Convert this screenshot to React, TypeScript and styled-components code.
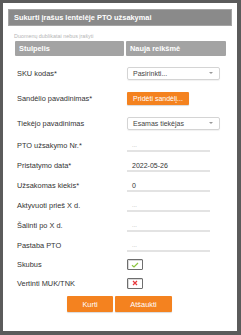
import styled, { createGlobalStyle } from 'styled-components';

const GlobalStyle = createGlobalStyle`
  html, body {
    margin: 0;
    padding: 0;
    background: #5b5b5b;
  }
  body {
    font-family: 'Liberation Sans', Arial, sans-serif;
    color: #333;
  }
`;

const Page = styled.div`
  width: 241px;
  height: 335px;
  padding: 3px 4px 4px 3px;
  box-sizing: border-box;
  background: #5b5b5b;
`;

const Dialog = styled.div`
  width: 234px;
  height: 328px;
  background: #fff;
  padding: 6px 5px 0 5px;
  box-sizing: border-box;
  display: flex;
  flex-direction: column;
`;

const TitleBar = styled.div`
  height: 17px;
  background: #8a8a8a;
  border: 1px solid #a5a5a5;
  box-sizing: border-box;
  display: flex;
  align-items: center;
  padding-left: 5px;
  color: #fff;
  font-weight: bold;
  font-size: 7.4px;
`;

const Hint = styled.div`
  margin: 5px 0 0 6px;
  font-size: 5.4px;
  color: #b5b5b5;
  height: 10px;
  line-height: 10px;
`;

const Body = styled.div`
  padding: 0 6px 0 7px;
  margin-top: 0;
`;

const HeadRow = styled.div`
  display: grid;
  grid-template-columns: 109px 100px;
  column-gap: 2px;
  height: 15px;
`;

const HeadCell = styled.div`
  background: #a3a3a3;
  border-radius: 1px;
  color: #fff;
  font-weight: bold;
  font-size: 7.4px;
  display: flex;
  align-items: center;
  padding-left: 4px;
`;

const Rows = styled.div`
  margin-top: 4px;
  display: flex;
  flex-direction: column;
`;

const Row = styled.div<{ $h: number }>`
  display: grid;
  grid-template-columns: 112px 1fr;
  align-items: center;
  height: ${(p) => p.$h}px;
  font-size: 7.4px;
  color: #333;
`;

const Label = styled.div`
  padding-left: 2px;
`;

const SelectBox = styled.div`
  width: 93px;
  height: 13px;
  box-sizing: border-box;
  border: 1px solid #d4d4d4;
  border-radius: 2px;
  display: flex;
  align-items: center;
  justify-content: space-between;
  padding: 0 6px 0 5px;
  font-size: 7px;
  color: #444;
  box-shadow: 0 1px 1px rgba(0, 0, 0, 0.06);
`;

const Caret = styled.span`
  width: 0;
  height: 0;
  border-left: 2px solid transparent;
  border-right: 2px solid transparent;
  border-top: 2px solid #999;
`;

const OrangeButton = styled.div`
  background: #f4821f;
  color: #fff;
  font-size: 7px;
  display: inline-flex;
  align-items: center;
  justify-content: center;
  height: 13px;
  border-radius: 1px;
  box-shadow: 0 1px 1px rgba(0, 0, 0, 0.15);
`;

const AddButton = styled(OrangeButton)`
  width: 62px;
`;

const Input = styled.div<{ $empty?: boolean }>`
  width: 83px;
  height: 11px;
  border-bottom: 2px solid #e3e3e3;
  font-size: ${(p) => (p.$empty ? '6px' : '7px')};
  color: ${(p) => (p.$empty ? '#aaa' : '#333')};
  padding-left: 5px;
  box-sizing: border-box;
  display: flex;
  align-items: center;
  margin-top: 2px;
`;

const Check = styled.div`
  width: 16px;
  height: 11px;
  box-sizing: border-box;
  border: 1px solid #6e6e6e;
  border-radius: 1px;
  box-shadow: inset 1px 1px 0 #d9d9d9;
  display: flex;
  align-items: center;
  justify-content: center;
`;

const Footer = styled.div`
  display: flex;
  justify-content: center;
  gap: 2px;
  margin-top: 4px;
  padding-right: 2px;
`;

const FooterButton = styled(OrangeButton)<{ $w: number }>`
  width: ${(p) => p.$w}px;
  height: 16px;
  font-size: 7.4px;
`;

const textRows = [
  { label: 'PTO užsakymo Nr.*', value: '' },
  { label: 'Pristatymo data*', value: '2022-05-26' },
  { label: 'Užsakomas kiekis*', value: '0' },
  { label: 'Aktyvuoti prieš X d.', value: '' },
  { label: 'Šalinti po X d.', value: '' },
  { label: 'Pastaba PTO', value: '' },
];

export default function App() {
  return (
    <Page>
      <GlobalStyle />
      <Dialog>
        <TitleBar>Sukurti įrašus lentelėje PTO užsakymai</TitleBar>
        <Hint>Duomenų dublikatai nebus įrašyti</Hint>
        <Body>
          <HeadRow>
            <HeadCell>Stulpelis</HeadCell>
            <HeadCell>Nauja reikšmė</HeadCell>
          </HeadRow>
          <Rows>
            <Row $h={26}>
              <Label>SKU kodas*</Label>
              <SelectBox>
                Pasirinkti...
                <Caret />
              </SelectBox>
            </Row>
            <Row $h={25}>
              <Label>Sandėlio pavadinimas*</Label>
              <div>
                <AddButton>Pridėti sandėlį...</AddButton>
              </div>
            </Row>
            <Row $h={24}>
              <Label>Tiekėjo pavadinimas</Label>
              <SelectBox>
                Esamas tiekėjas
                <Caret />
              </SelectBox>
            </Row>
            {textRows.map((r) => (
              <Row key={r.label} $h={20}>
                <Label>{r.label}</Label>
                <Input $empty={!r.value}>{r.value || '...'}</Input>
              </Row>
            ))}
            <Row $h={19}>
              <Label>Skubus</Label>
              <Check>
                <svg width="8" height="6" viewBox="0 0 8 6">
                  <path d="M1 3.2 L3 5 L7 1" fill="none" stroke="#8cc63f" strokeWidth="1.2" />
                </svg>
              </Check>
            </Row>
            <Row $h={18}>
              <Label>Vertinti MUK/TNK</Label>
              <Check>
                <svg width="6" height="6" viewBox="0 0 6 6">
                  <path d="M1 1 L5 5 M5 1 L1 5" fill="none" stroke="#e8383d" strokeWidth="1.2" />
                </svg>
              </Check>
            </Row>
          </Rows>
          <Footer>
            <FooterButton $w={46}>Kurti</FooterButton>
            <FooterButton $w={57}>Atšaukti</FooterButton>
          </Footer>
        </Body>
      </Dialog>
    </Page>
  );
}
